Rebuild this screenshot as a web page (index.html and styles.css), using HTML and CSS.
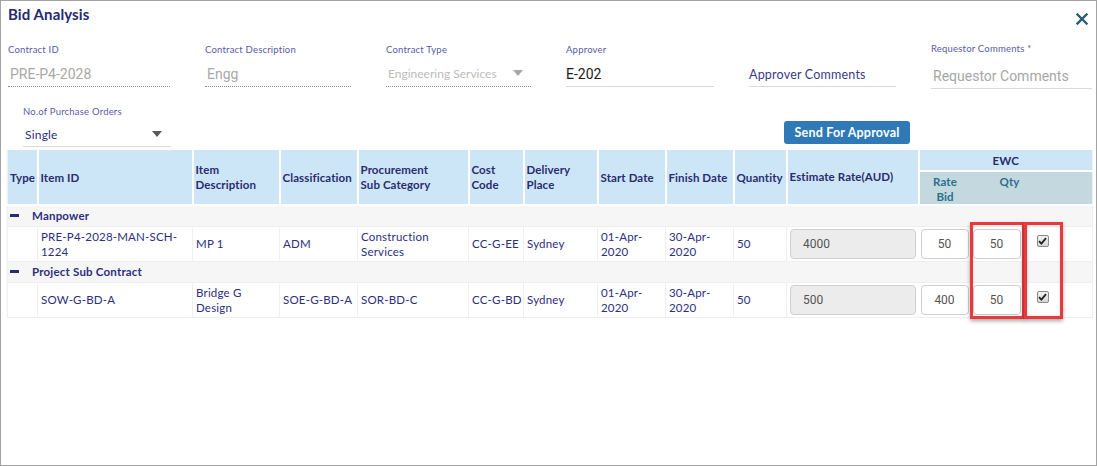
FILE: index.html
```html
<!DOCTYPE html>
<html>
<head>
<meta charset="utf-8">
<link rel="stylesheet" href="styles.css">
</head>
<body>
<div class="dialog">
  <div class="title-bar">
    <h1 class="title">Bid Analysis</h1>
    <span class="close">
      <svg width="12" height="12" viewBox="0 0 12 12"><path d="M1.5 1.5 L10.5 10.5 M10.5 1.5 L1.5 10.5" stroke="#2f5b78" stroke-width="2.4" stroke-linecap="square"/></svg>
    </span>
  </div>

  <div class="form-row">
    <div class="field">
      <label class="lbl">Contract ID</label>
      <div class="val val-disabled dotted">PRE-P4-2028</div>
    </div>
    <div class="field">
      <label class="lbl">Contract Description</label>
      <div class="val val-disabled dotted">Engg</div>
    </div>
    <div class="field">
      <label class="lbl">Contract Type</label>
      <div class="val val-select-dis dotted">Engineering Services<span class="caret caret-light"></span></div>
    </div>
    <div class="field">
      <label class="lbl">Approver</label>
      <div class="val val-dark solid">E-202</div>
    </div>
    <div class="field">
      <label class="lbl lbl-empty">&nbsp;</label>
      <div class="val val-navy solid">Approver Comments</div>
    </div>
    <div class="field field-req">
      <label class="lbl">Requestor Comments *</label>
      <div class="val val-placeholder solid">Requestor Comments</div>
    </div>
  </div>

  <div class="form-row2">
    <div class="field po-field">
      <label class="lbl">No.of Purchase Orders</label>
      <div class="val val-select solid">Single<span class="caret"></span></div>
    </div>
    <button class="btn">Send For Approval</button>
  </div>

  <table class="grid">
    <colgroup>
      <col style="width:30px"><col style="width:155px"><col style="width:87px"><col style="width:78px">
      <col style="width:111px"><col style="width:55px"><col style="width:74px"><col style="width:68px">
      <col style="width:68px"><col style="width:53px"><col style="width:132px">
      <col style="width:52px"><col style="width:52px"><col style="width:40px"><col style="width:30px">
    </colgroup>
    <thead>
      <tr class="h1">
        <th rowspan="2">Type</th>
        <th rowspan="2">Item ID</th>
        <th rowspan="2">Item<br>Description</th>
        <th rowspan="2">Classification</th>
        <th rowspan="2">Procurement<br>Sub Category</th>
        <th rowspan="2">Cost<br>Code</th>
        <th rowspan="2">Delivery<br>Place</th>
        <th rowspan="2">Start Date</th>
        <th rowspan="2">Finish Date</th>
        <th rowspan="2">Quantity</th>
        <th rowspan="2" class="top">Estimate Rate(AUD)</th>
        <th colspan="4" class="ewc">EWC</th>
      </tr>
      <tr class="h2">
        <th class="sub sub-rate">Rate<br>Bid</th>
        <th colspan="3" class="sub sub-qty">Qty</th>
      </tr>
    </thead>
    <tbody>
      <tr class="group">
        <td colspan="15"><span class="minus"></span>Manpower</td>
      </tr>
      <tr class="row">
        <td></td>
        <td>PRE-P4-2028-MAN-SCH-<br>1224</td>
        <td>MP 1</td>
        <td>ADM</td>
        <td>Construction<br>Services</td>
        <td>CC-G-EE</td>
        <td>Sydney</td>
        <td>01-Apr-<br>2020</td>
        <td>30-Apr-<br>2020</td>
        <td>50</td>
        <td><div class="inp inp-ro">4000</div></td>
        <td><div class="inp inp-c">50</div></td>
        <td><div class="inp inp-c">50</div></td>
        <td class="chk-cell"><span class="chk"><svg width="9" height="8" viewBox="0 0 9 8"><path d="M1 4.2 L3.4 6.6 L8 1.2" fill="none" stroke="#222" stroke-width="1.8"/></svg></span></td>
        <td></td>
      </tr>
      <tr class="group">
        <td colspan="15"><span class="minus"></span>Project Sub Contract</td>
      </tr>
      <tr class="row">
        <td></td>
        <td>SOW-G-BD-A</td>
        <td>Bridge G<br>Design</td>
        <td>SOE-G-BD-A</td>
        <td>SOR-BD-C</td>
        <td>CC-G-BD</td>
        <td>Sydney</td>
        <td>01-Apr-<br>2020</td>
        <td>30-Apr-<br>2020</td>
        <td>50</td>
        <td><div class="inp inp-ro">500</div></td>
        <td><div class="inp inp-c">400</div></td>
        <td><div class="inp inp-c">50</div></td>
        <td class="chk-cell"><span class="chk"><svg width="9" height="8" viewBox="0 0 9 8"><path d="M1 4.2 L3.4 6.6 L8 1.2" fill="none" stroke="#222" stroke-width="1.8"/></svg></span></td>
        <td></td>
      </tr>
    </tbody>
  </table>

  <div class="mark mark-qty"></div>
  <div class="mark mark-chk"></div>
</div>
</body>
</html>
```

FILE: styles.css
```css
* { box-sizing: border-box; }
html, body { margin: 0; padding: 0; background: #fff; }
body { font-family: Lato, "Open Sans", sans-serif; }

.dialog {
  position: relative;
  width: 1097px;
  height: 466px;
  border: 1px solid #a3a3a3;
  overflow: hidden;
}

.title-bar {
  display: flex;
  justify-content: space-between;
  align-items: center;
  padding: 2px 7px 0 7px;
  height: 24px;
}
.title {
  margin: 0;
  font-size: 15px;
  font-weight: 700;
  color: #27276f;
  letter-spacing: 0.1px;
}
.close { display: flex; margin-top: 10px; margin-right: 1px; }

.form-row {
  display: grid;
  grid-template-columns: 162px 146px 145px 148px 147px 161px;
  grid-template-rows: 43px;
  column-gap: 35px;
  padding: 19px 0 0 7px;
  height: 62px;
}
.field { display: flex; flex-direction: column; }
.lbl {
  font-size: 9.5px;
  color: #5c5aa8;
  height: 12px;
  line-height: 12px;
  letter-spacing: 0.2px;
}
.val {
  height: 25px;
  line-height: 22px;
  padding-top: 1px;
  font-family: Roboto, "Open Sans", sans-serif;
  font-size: 14px;
  position: relative;
  margin-top: 6px;
}
.dotted { border-bottom: 1px dotted #8c8c8c; }
.solid { border-bottom: 1px solid #d9d9d9; }
.val-disabled { color: #a9a9a9; padding-left: 2px; }
.val-select-dis { color: #bcbcbc; font-family: Lato, sans-serif; font-size: 12px; padding-left: 2px; }
.val-dark { color: #1b1b1b; }
.val-navy { color: #3b3a8a; font-family: Lato, sans-serif; font-size: 12.5px; letter-spacing: 0.2px; padding-top: 2px; }
.val-placeholder { color: #a6a6a6; padding-left: 2px; }
.field-req .lbl { margin-top: -1px; }
.field-req .val { height: 28px; line-height: 24px; padding-top: 3px; margin-top: 6px; }

.caret {
  position: absolute;
  right: 10px;
  top: 9px;
  width: 0; height: 0;
  border-left: 5px solid transparent;
  border-right: 5px solid transparent;
  border-top: 6px solid #5a5a5a;
}
.caret-light { border-top-color: #a8a8a8; right: 8px; top: 8px; }

.form-row2 {
  display: flex;
  align-items: flex-start;
  padding: 19px 0 0 22px;
  height: 63px;
}
.po-field { width: 148px; }
.val-select {
  font-family: Lato, sans-serif;
  font-size: 12px;
  color: #2e2e7c;
  padding-left: 2px;
  margin-top: 4px;
  height: 25px;
  line-height: 24px;
  letter-spacing: 0.2px;
}
.val-select .caret { right: 9px; top: 9px; }
.btn {
  margin-left: 613px;
  margin-top: 15px;
  width: 126px;
  height: 23px;
  background: #2e79b6;
  border: none;
  border-radius: 3px;
  color: #fff;
  font-family: Lato, sans-serif;
  font-weight: 700;
  font-size: 12.5px;
  letter-spacing: 0.2px;
  padding: 0;
}

.grid {
  margin-left: 6px;
  margin-top: 0;
  width: 1085px;
  border-collapse: collapse;
  table-layout: fixed;
  font-size: 11.5px;
  color: #2d2e7e;
  letter-spacing: 0.2px;
}
.grid th {
  background: #cde6f7;
  color: #2a2c70;
  font-weight: 700;
  text-align: left;
  padding: 0 2px;
  border: 2px solid #fff;
  border-top: 0;
  line-height: 15px;
  font-size: 11.5px;
  letter-spacing: 0.1px;
  white-space: nowrap;
}
.grid th:first-child { border-left: 1px solid #f0f0f0; }
.grid tr.h1 { height: 21px; }
.grid tr.h1 th[rowspan] { height: 55px; }
.grid th.top { vertical-align: top; padding-top: 19px; }
.grid th.ewc { text-align: center; height: 21px; border-right: 1px solid #f0f0f0; }
.grid th.sub {
  background: #c3d9df;
  color: #2b6f8f;
  vertical-align: top;
  padding-top: 2px;
  height: 34px;
}
.grid th.sub-rate { text-align: center; border-right: 0; }
.grid th.sub-qty { padding-left: 29px; border-left: 0; border-right: 1px solid #f0f0f0; }

.grid td {
  padding: 0 3px;
  border: 1px solid #efefef;
  line-height: 15px;
  vertical-align: middle;
  white-space: nowrap;
}
.grid tr.group td {
  background: #f6f6f6;
  height: 21px;
  font-weight: 700;
  padding-left: 2px;
}
.minus {
  display: inline-block;
  width: 9px;
  height: 3px;
  background: #2a2c70;
  vertical-align: middle;
  margin: 0 13px 3px 0;
}
.grid tr.row td { height: 35px; }
.grid tr.row td:nth-child(n+11) { border-left: 0; border-right: 0; }
.grid tr.row td:last-child { border-right: 1px solid #efefef; }
.grid tr.row td:nth-child(11) { border-left: 1px solid #efefef; }

.inp {
  height: 30px;
  border: 1px solid #cfcfcf;
  border-radius: 4px;
  line-height: 28px;
  font-family: Roboto, sans-serif;
  font-size: 12px;
  color: #555;
  letter-spacing: 0;
}
.inp-ro { background: #ececec; padding-left: 12px; margin-right: 0; }
.inp-c { text-align: center; background: #fff; margin: 0 -1px; }
.grid td.chk-cell { vertical-align: top; text-align: center; padding-top: 8px; line-height: 0; }
.chk {
  display: inline-flex;
  align-items: center;
  justify-content: center;
  width: 12px;
  height: 12px;
  border: 1px solid #8a8a8a;
  border-radius: 2px;
  background: linear-gradient(#f2f2f2, #d6d6d6);
}

.mark {
  position: absolute;
  border: 3px solid #e8393d;
  box-shadow: 0 2px 4px rgba(0,0,0,0.35), inset 0 0 3px rgba(0,0,0,0.15);
  top: 221px;
  height: 97px;
}
.mark-qty { left: 969px; width: 55px; }
.mark-chk { left: 1023px; width: 39px; }
```
